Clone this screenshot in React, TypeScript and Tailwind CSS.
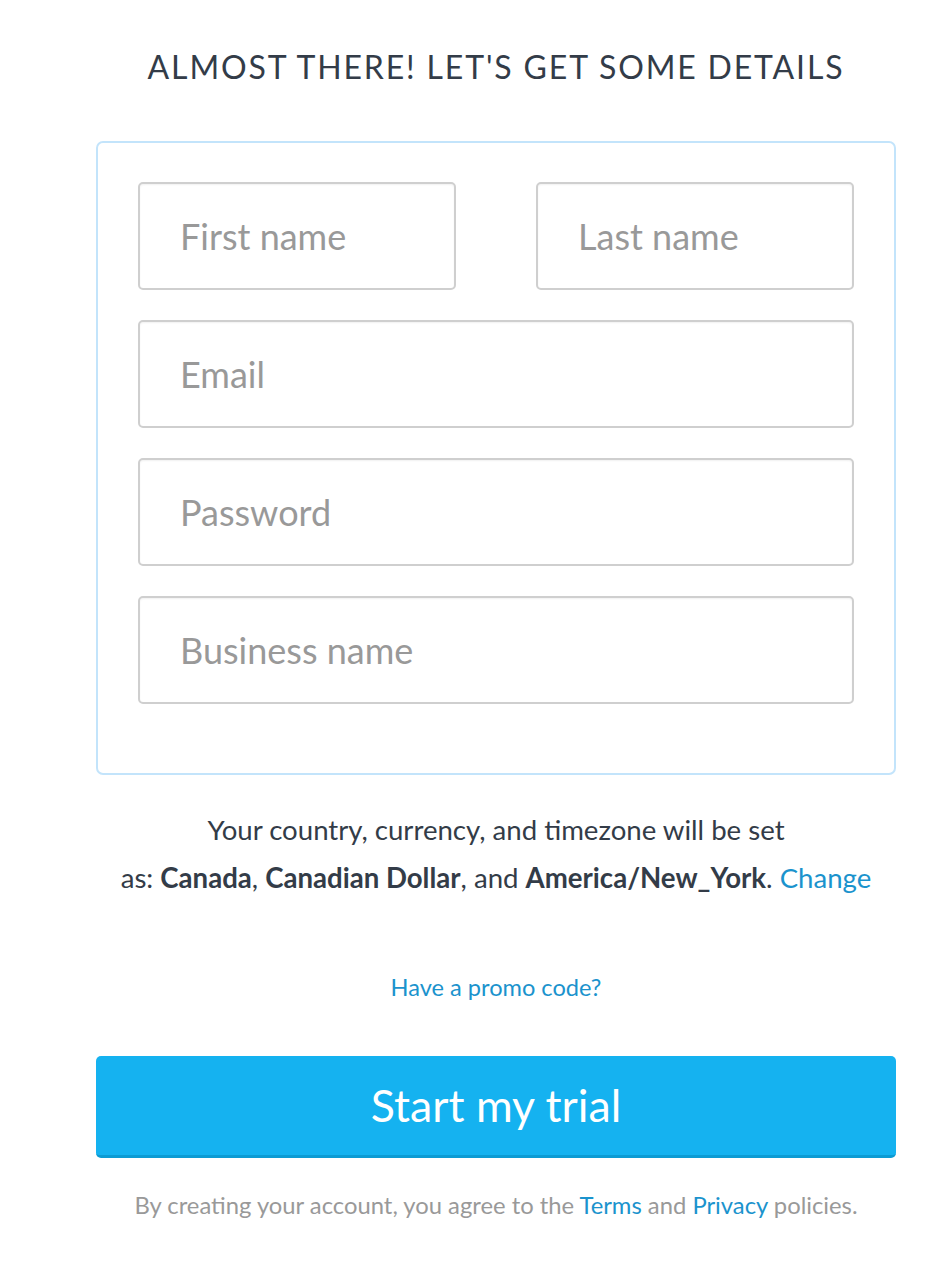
import React from 'react';

function Field({ placeholder, type = 'text' }: { placeholder: string; type?: string }) {
  return (
    <input
      type={type}
      placeholder={placeholder}
      className="block w-full h-[108px] rounded-[5px] border-2 border-[#cfcfcf] bg-white pl-[40px] text-[36px] text-[#333] placeholder:text-[#999] shadow-[inset_0_1px_2px_rgba(0,0,0,0.06)] outline-none"
    />
  );
}

export default function App() {
  return (
    <div className="min-h-screen bg-white font-['Lato','Liberation_Sans',sans-serif]">
      <div className="ml-[96px] w-[800px] pt-[46px]">
        <h1 className="text-center text-[32px] leading-[42px] tracking-[1.85px] text-[#333c48] uppercase">
          Almost there! Let's get some details
        </h1>

        <form className="mt-[53px] rounded-[7px] border-2 border-[#c3e4fb] px-[40px] pt-[39px] pb-[69px]">
          <div className="flex flex-col gap-[30px]">
            <div className="flex gap-[80px]">
              <Field placeholder="First name" />
              <Field placeholder="Last name" />
            </div>
            <Field placeholder="Email" type="email" />
            <Field placeholder="Password" type="password" />
            <Field placeholder="Business name" />
          </div>
        </form>

        <p className="mt-[31px] text-center text-[27.6px] leading-[48px] text-[#333c48]">
          Your country, currency, and timezone will be set
          <br />
          as: <b>Canada</b>, <b>Canadian Dollar</b>, and <b>America/New_York</b>.{' '}
          <a className="text-[#1b93cd]">Change</a>
        </p>

        <p className="mt-[70px] text-center text-[23.6px] leading-[30px]">
          <a className="text-[#1b93cd]">Have a promo code?</a>
        </p>

        <button className="mt-[54px] block w-full h-[102px] rounded-[5px] bg-[#15b2f0] border-b-[3px] border-[#0c9bd3] text-[44.7px] text-white">
          Start my trial
        </button>

        <p className="mt-[32px] text-center text-[23.8px] leading-[30px] text-[#999]">
          By creating your account, you agree to the <a className="text-[#1b93cd]">Terms</a> and{' '}
          <a className="text-[#1b93cd]">Privacy</a> policies.
        </p>
      </div>
    </div>
  );
}
